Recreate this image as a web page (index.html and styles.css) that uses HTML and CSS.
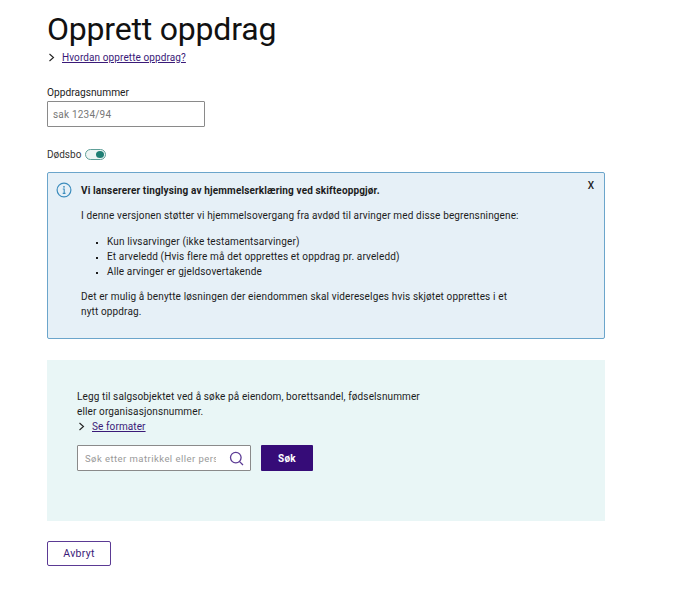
FILE: index.html
```html
<!DOCTYPE html>
<html lang="no">
<head>
<meta charset="utf-8">
<title>Opprett oppdrag</title>
<link rel="stylesheet" href="styles.css">
</head>
<body>
<main class="page">
  <h1 class="title">Opprett oppdrag</h1>
  <div class="disclosure">
    <svg class="chevron" width="7" height="9" viewBox="0 0 7 9"><path d="M1.5 1 5.5 4.5 1.5 8" fill="none" stroke="#222" stroke-width="1.1"/></svg>
    <a class="link" href="#">Hvordan opprette oppdrag?</a>
  </div>
  <label class="field-label" for="nr">Oppdragsnummer</label>
  <input class="text-input" id="nr" placeholder="sak 1234/94">
  <div class="toggle-row">
    <span class="toggle-label">Dødsbo</span>
    <span class="toggle"><span class="knob"></span></span>
  </div>
  <section class="alert">
    <svg class="info" width="16" height="16" viewBox="0 0 16 16"><circle cx="8" cy="8" r="6.9" fill="none" stroke="#3d8dbd" stroke-width="1.2"/><circle cx="8" cy="4.8" r="0.9" fill="#3d8dbd"/><path d="M6.8 7H8.2V11.2M6.7 11.4H9.5" fill="none" stroke="#3d8dbd" stroke-width="1.1"/></svg>
    <div class="alert-body">
      <p class="alert-title">Vi lansererer tinglysing av hjemmelserklæring ved skifteoppgjør.</p>
      <p class="alert-text">I denne versjonen støtter vi hjemmelsovergang fra avdød til arvinger med disse begrensningene:</p>
      <ul class="alert-list">
        <li>Kun livsarvinger (ikke testamentsarvinger)</li>
        <li>Et arveledd (Hvis flere må det opprettes et oppdrag pr. arveledd)</li>
        <li>Alle arvinger er gjeldsovertakende</li>
      </ul>
      <p class="alert-text">Det er mulig å benytte løsningen der eiendommen skal videreselges hvis skjøtet opprettes i et nytt oppdrag.</p>
    </div>
    <span class="close">X</span>
  </section>
  <section class="search-panel">
    <p class="search-text">Legg til salgsobjektet ved å søke på eiendom, borettsandel, fødselsnummer<br>eller organisasjonsnummer.</p>
    <div class="disclosure disclosure-small">
      <svg class="chevron" width="7" height="9" viewBox="0 0 7 9"><path d="M1.5 1 5.5 4.5 1.5 8" fill="none" stroke="#222" stroke-width="1.1"/></svg>
      <a class="link" href="#">Se formater</a>
    </div>
    <div class="search-row">
      <div class="search-box">
        <input class="search-input" placeholder="Søk etter matrikkel eller person">
        <svg class="search-icon" width="15" height="15" viewBox="0 0 15 15"><circle cx="6.8" cy="6.6" r="5.3" fill="none" stroke="#5b3a94" stroke-width="1.3"/><path d="M10.6 10.6 14 14" stroke="#5b3a94" stroke-width="1.3"/></svg>
      </div>
      <button class="btn-primary">Søk</button>
    </div>
  </section>
  <button class="btn-secondary">Avbryt</button>
</main>
</body>
</html>
```
FILE: styles.css
```css
* { box-sizing: border-box; }
html, body { margin: 0; background: #fff; }
body { font-family: "Roboto", "Liberation Sans", sans-serif; color: #1c1c1c; font-size: 10px; }
.page { width: 558px; margin-left: 47px; padding-top: 9px; }
.title { margin: 0; font-size: 32px; line-height: 40px; font-weight: 400; letter-spacing: -0.2px; color: #111; }
.disclosure { display: flex; align-items: center; gap: 7px; margin: 1px 0 0 1px; height: 14px; }
.link { color: #3a1a78; font-size: 10px; letter-spacing: 0.1px; }
.field-label { display: block; margin-top: 22px; font-size: 10.2px; line-height: 14px; letter-spacing: 0; color: #222; }
.text-input { display: block; width: 158px; height: 26px; margin-top: 1px; padding: 0 5px; border: 1px solid #8a8a8a; border-radius: 1px; font: 10px "Roboto", sans-serif; letter-spacing: 0.2px; outline: none; }
.text-input::placeholder { color: #777; opacity: 1; }
.toggle-row { display: flex; align-items: center; gap: 4px; margin-top: 20px; height: 14px; }
.toggle-label { font-size: 10px; letter-spacing: 0; color: #333; }
.toggle { width: 21px; height: 11px; border: 1px solid #5f9f98; border-radius: 6px; background: #eef5f4; display: flex; align-items: center; justify-content: flex-end; padding-right: 1px; }
.knob { width: 8px; height: 7px; border-radius: 50%; background: #1f7f74; }
.alert { position: relative; display: flex; gap: 9px; height: 167px; margin-top: 11px; padding: 10px 10px 0 8px; background: #e6f0f7; border: 1px solid #6ba5cb; border-radius: 2px; }
.info { flex: none; margin-top: -1px; }
.alert-body { width: 440px; font-size: 10px; line-height: 15px; letter-spacing: 0.14px; color: #1c1c1c; }
.alert-body p { margin: 0; }
.alert-title { font-weight: 700; }
.alert-body .alert-text { margin-top: 10px; }
.alert-list { margin: 11px 0 0 0; padding: 0 0 0 26px; list-style: square; }
.alert-list li::marker { font-size: 7px; }
.close { position: absolute; top: 7px; right: 10px; font-size: 10px; font-weight: 500; line-height: 12px; }
.search-panel { height: 161px; margin-top: 21px; padding: 29px 30px 0; background: #e9f6f6; }
.search-text { margin: 0; font-size: 10px; line-height: 15px; letter-spacing: 0.12px; }
.disclosure-small { margin: 0 0 0 1px; }
.search-row { display: flex; align-items: center; gap: 10px; margin-top: 12px; }
.search-box { display: flex; align-items: center; width: 174px; height: 26px; padding: 0 6px 0 7px; background: #fff; border: 1px solid #8a8a8a; border-radius: 1px; }
.search-input { flex: 1; min-width: 0; border: 0; padding: 0; outline: none; font: 9.5px "Roboto", sans-serif; letter-spacing: 0.45px; background: transparent; }
.search-input::placeholder { color: #999; opacity: 1; }
.search-icon { flex: none; margin-left: 13px; }
.btn-primary { width: 52px; height: 26px; border: 0; border-radius: 1px; background: #360c78; color: #fff; font: 700 10px "Roboto", sans-serif; letter-spacing: 0.3px; }
.btn-secondary { display: block; width: 64px; height: 25px; margin-top: 20px; background: #fff; border: 1px solid #5b3a94; border-radius: 2px; color: #3a1a78; font: 400 10.5px "Roboto", sans-serif; letter-spacing: 0.3px; }
```
